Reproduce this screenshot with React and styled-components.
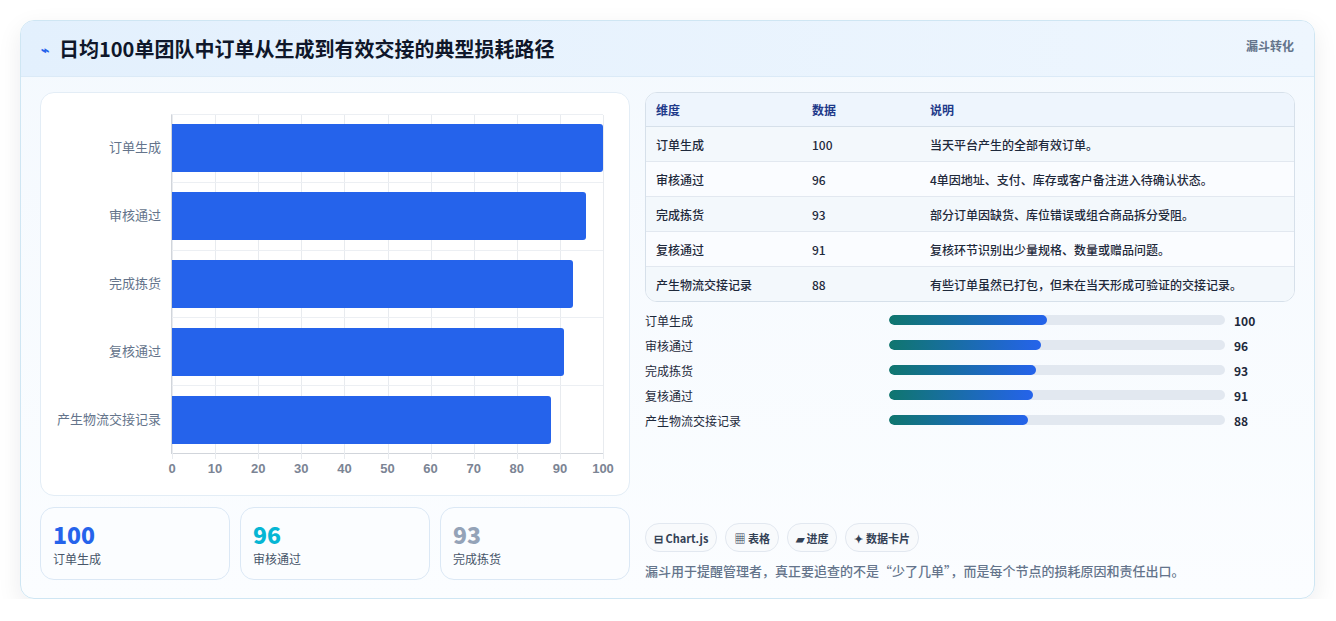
import React from "react"
import styled, { createGlobalStyle } from "styled-components"

const rows = [
  { name: "订单生成", value: 100, note: "当天平台产生的全部有效订单。" },
  { name: "审核通过", value: 96, note: "4单因地址、支付、库存或客户备注进入待确认状态。" },
  { name: "完成拣货", value: 93, note: "部分订单因缺货、库位错误或组合商品拆分受阻。" },
  { name: "复核通过", value: 91, note: "复核环节识别出少量规格、数量或赠品问题。" },
  { name: "产生物流交接记录", value: 88, note: "有些订单虽然已打包，但未在当天形成可验证的交接记录。" },
]

const ticks = [0, 10, 20, 30, 40, 50, 60, 70, 80, 90, 100]

export default function App() {
  return (
    <>
      <Global />
      <Card>
        <Header>
          <Title><Bolt>⌁</Bolt>日均100单团队中订单从生成到有效交接的典型损耗路径</Title>
          <Tag>漏斗转化</Tag>
        </Header>
        <Body>
          <Left>
            <ChartBox>
              <Chart>
                <YLabels>
                  {rows.map((r) => <YLabel key={r.name}>{r.name}</YLabel>)}
                </YLabels>
                <Plot>
                  {ticks.map((t) => <VLine key={t} style={{ left: `${t}%` }} />)}
                  {rows.map((r) => (
                    <BarRow key={r.name}>
                      <Bar style={{ width: `${r.value}%` }} />
                    </BarRow>
                  ))}
                  <XAxis>
                    {ticks.map((t) => <Tick key={t} style={{ left: `${t}%` }}>{t}</Tick>)}
                  </XAxis>
                </Plot>
              </Chart>
            </ChartBox>
            <Stats>
              <Stat><StatNum color="#2563eb">100</StatNum><StatLabel>订单生成</StatLabel></Stat>
              <Stat><StatNum color="#06b6d4">96</StatNum><StatLabel>审核通过</StatLabel></Stat>
              <Stat><StatNum color="#94a3b8">93</StatNum><StatLabel>完成拣货</StatLabel></Stat>
            </Stats>
          </Left>
          <Right>
            <div>
              <Table>
                <colgroup>
                  <col style={{ width: 156 }} />
                  <col style={{ width: 118 }} />
                  <col />
                </colgroup>
                <thead>
                  <tr><Th>维度</Th><Th>数据</Th><Th>说明</Th></tr>
                </thead>
                <tbody>
                  {rows.map((r, i) => (
                    <Tr key={r.name} odd={i % 2 === 1}>
                      <Td>{r.name}</Td><Td>{r.value}</Td><Td>{r.note}</Td>
                    </Tr>
                  ))}
                </tbody>
              </Table>
              <Progress>
                {rows.map((r) => (
                  <PRow key={r.name}>
                    <PLabel>{r.name}</PLabel>
                    <Track><Fill style={{ width: `${r.value * 0.47}%` }} /></Track>
                    <PVal>{r.value}</PVal>
                  </PRow>
                ))}
              </Progress>
            </div>
            <Footer>
              <Chips>
                <Chip>⊟ Chart.js</Chip>
                <Chip>▦ 表格</Chip>
                <Chip>▰ 进度</Chip>
                <Chip>✦ 数据卡片</Chip>
              </Chips>
              <Note>漏斗用于提醒管理者，真正要追查的不是“少了几单”，而是每个节点的损耗原因和责任出口。</Note>
            </Footer>
          </Right>
        </Body>
      </Card>
    </>
  )
}

const Global = createGlobalStyle`
  body {
    margin: 0;
    background: #ffffff;
    font-family: "Noto Sans CJK SC", "Noto Sans", sans-serif;
    color: #0f172a;
  }
`

const Card = styled.div`
  margin: 20px 21px 0 20px;
  height: 579px;
  box-sizing: border-box;
  border: 1px solid #cfe6f3;
  border-radius: 14px;
  background: linear-gradient(180deg, #f4f9fe 0%, #fbfdff 100%);
  box-shadow: 0 8px 24px rgba(15, 23, 42, 0.08);
  overflow: hidden;
  display: flex;
  flex-direction: column;
`

const Header = styled.div`
  height: 55px;
  flex: none;
  display: flex;
  justify-content: space-between;
  align-items: flex-start;
  padding: 0 20px;
  background: linear-gradient(90deg, #e3f0fd, #eef6fe);
  border-bottom: 1px solid #dbeaf7;
`

const Title = styled.h1`
  margin: 13px 0 0;
  font-size: 20px;
  font-weight: 700;
  display: flex;
  align-items: center;
  gap: 10px;
  color: #0f172a;
`

const Bolt = styled.span`
  color: #2563eb;
  font-size: 14px;
`

const Tag = styled.span`
  margin-top: 16px;
  font-size: 12px;
  font-weight: 700;
  color: #64748b;
`

const Body = styled.div`
  flex: 1;
  display: flex;
  gap: 15px;
  padding: 15px 19px 18px 19px;
`

const Left = styled.div`
  width: 590px;
  display: flex;
  flex-direction: column;
  gap: 11px;
`

const ChartBox = styled.div`
  height: 404px;
  box-sizing: border-box;
  background: #fff;
  border: 1px solid #e3edf6;
  border-radius: 14px;
  padding: 21px 26px 0 0;
`

const Chart = styled.div`
  display: flex;
  height: 340px;
`

const YLabels = styled.div`
  width: 130px;
  display: flex;
  flex-direction: column;
`

const YLabel = styled.div`
  flex: 1;
  display: flex;
  align-items: center;
  justify-content: flex-end;
  padding: 0 10px 4px 0;
  font-size: 13px;
  color: #64748b;
`

const Plot = styled.div`
  position: relative;
  flex: 1;
  display: flex;
  flex-direction: column;
  border-left: 1px solid #d1d5db;
  border-bottom: 1px solid #d1d5db;
  border-top: 1px solid #eceff3;
`

const VLine = styled.div`
  position: absolute;
  top: 0;
  bottom: -6px;
  width: 1px;
  background: #e8ebef;
`

const BarRow = styled.div`
  position: relative;
  flex: 1;
  display: flex;
  align-items: center;
  border-bottom: 1px solid #eceff3;
  &:nth-last-child(2) { border-bottom: none; }
`

const Bar = styled.div`
  height: 48px;
  background: #2563eb;
  border-radius: 0 3px 3px 0;
`

const XAxis = styled.div`
  position: absolute;
  left: 0;
  right: 0;
  top: 100%;
`

const Tick = styled.span`
  position: absolute;
  top: 8px;
  transform: translateX(-50%);
  font-family: "Liberation Sans", sans-serif;
  font-size: 13px;
  font-weight: 700;
  color: #7b8494;
`

const Stats = styled.div`
  display: flex;
  gap: 10px;
`

const Stat = styled.div`
  flex: 1;
  height: 73px;
  box-sizing: border-box;
  border: 1px solid #dbe8f5;
  border-radius: 14px;
  background: #fbfdff;
  padding: 12px 12px;
`

const StatNum = styled.div`
  font-size: 23px;
  font-weight: 800;
  line-height: 28px;
  color: ${(p) => p.color};
`

const StatLabel = styled.div`
  font-size: 12px;
  color: #475569;
  margin-top: 2px;
`

const Right = styled.div`
  flex: 1;
  display: flex;
  flex-direction: column;
  justify-content: space-between;
`

const Table = styled.table`
  width: 100%;
  table-layout: fixed;
  border-collapse: separate;
  border-spacing: 0;
  border: 1px solid #d6e0ea;
  border-radius: 12px;
  overflow: hidden;
  font-size: 12px;
  background: #fff;
`

const Th = styled.th`
  text-align: left;
  height: 33px;
  padding: 0 10px;
  background: #eef5fd;
  color: #1e3a8a;
  font-weight: 700;
  border-bottom: 1px solid #d6e0ea;
`

const Tr = styled.tr`
  background: ${(p) => (p.odd ? "#fafcff" : "#f3f8fc")};
`

const Td = styled.td`
  height: 34px;
  padding: 0 10px;
  color: #1e293b;
  font-weight: 500;
  white-space: nowrap;
  tr:not(:last-child) > & { border-bottom: 1px solid #e2e8f0; }
`

const Progress = styled.div`
  margin-top: 9px;
  display: flex;
  flex-direction: column;
  gap: 7px;
`

const PRow = styled.div`
  display: flex;
  align-items: center;
  height: 18px;
`

const PLabel = styled.div`
  width: 244px;
  font-size: 12px;
  color: #1e293b;
`

const Track = styled.div`
  width: 336px;
  height: 10px;
  border-radius: 5px;
  background: #e2e8f0;
  overflow: hidden;
`

const Fill = styled.div`
  height: 100%;
  border-radius: 5px;
  background: linear-gradient(90deg, #0f766e, #2563eb);
`

const PVal = styled.div`
  margin-left: 9px;
  font-size: 12px;
  font-weight: 700;
  color: #1e293b;
`

const Footer = styled.div`
  display: flex;
  flex-direction: column;
  gap: 9px;
`

const Chips = styled.div`
  display: flex;
  gap: 8px;
`

const Chip = styled.span`
  height: 27px;
  display: inline-flex;
  align-items: center;
  padding: 0 8px;
  border: 1px solid #e2e8f0;
  border-radius: 14px;
  background: #f8fafc;
  font-size: 11px;
  font-weight: 700;
  color: #334155;
`

const Note = styled.div`
  font-size: 13px;
  font-weight: 500;
  color: #64748b;
`
